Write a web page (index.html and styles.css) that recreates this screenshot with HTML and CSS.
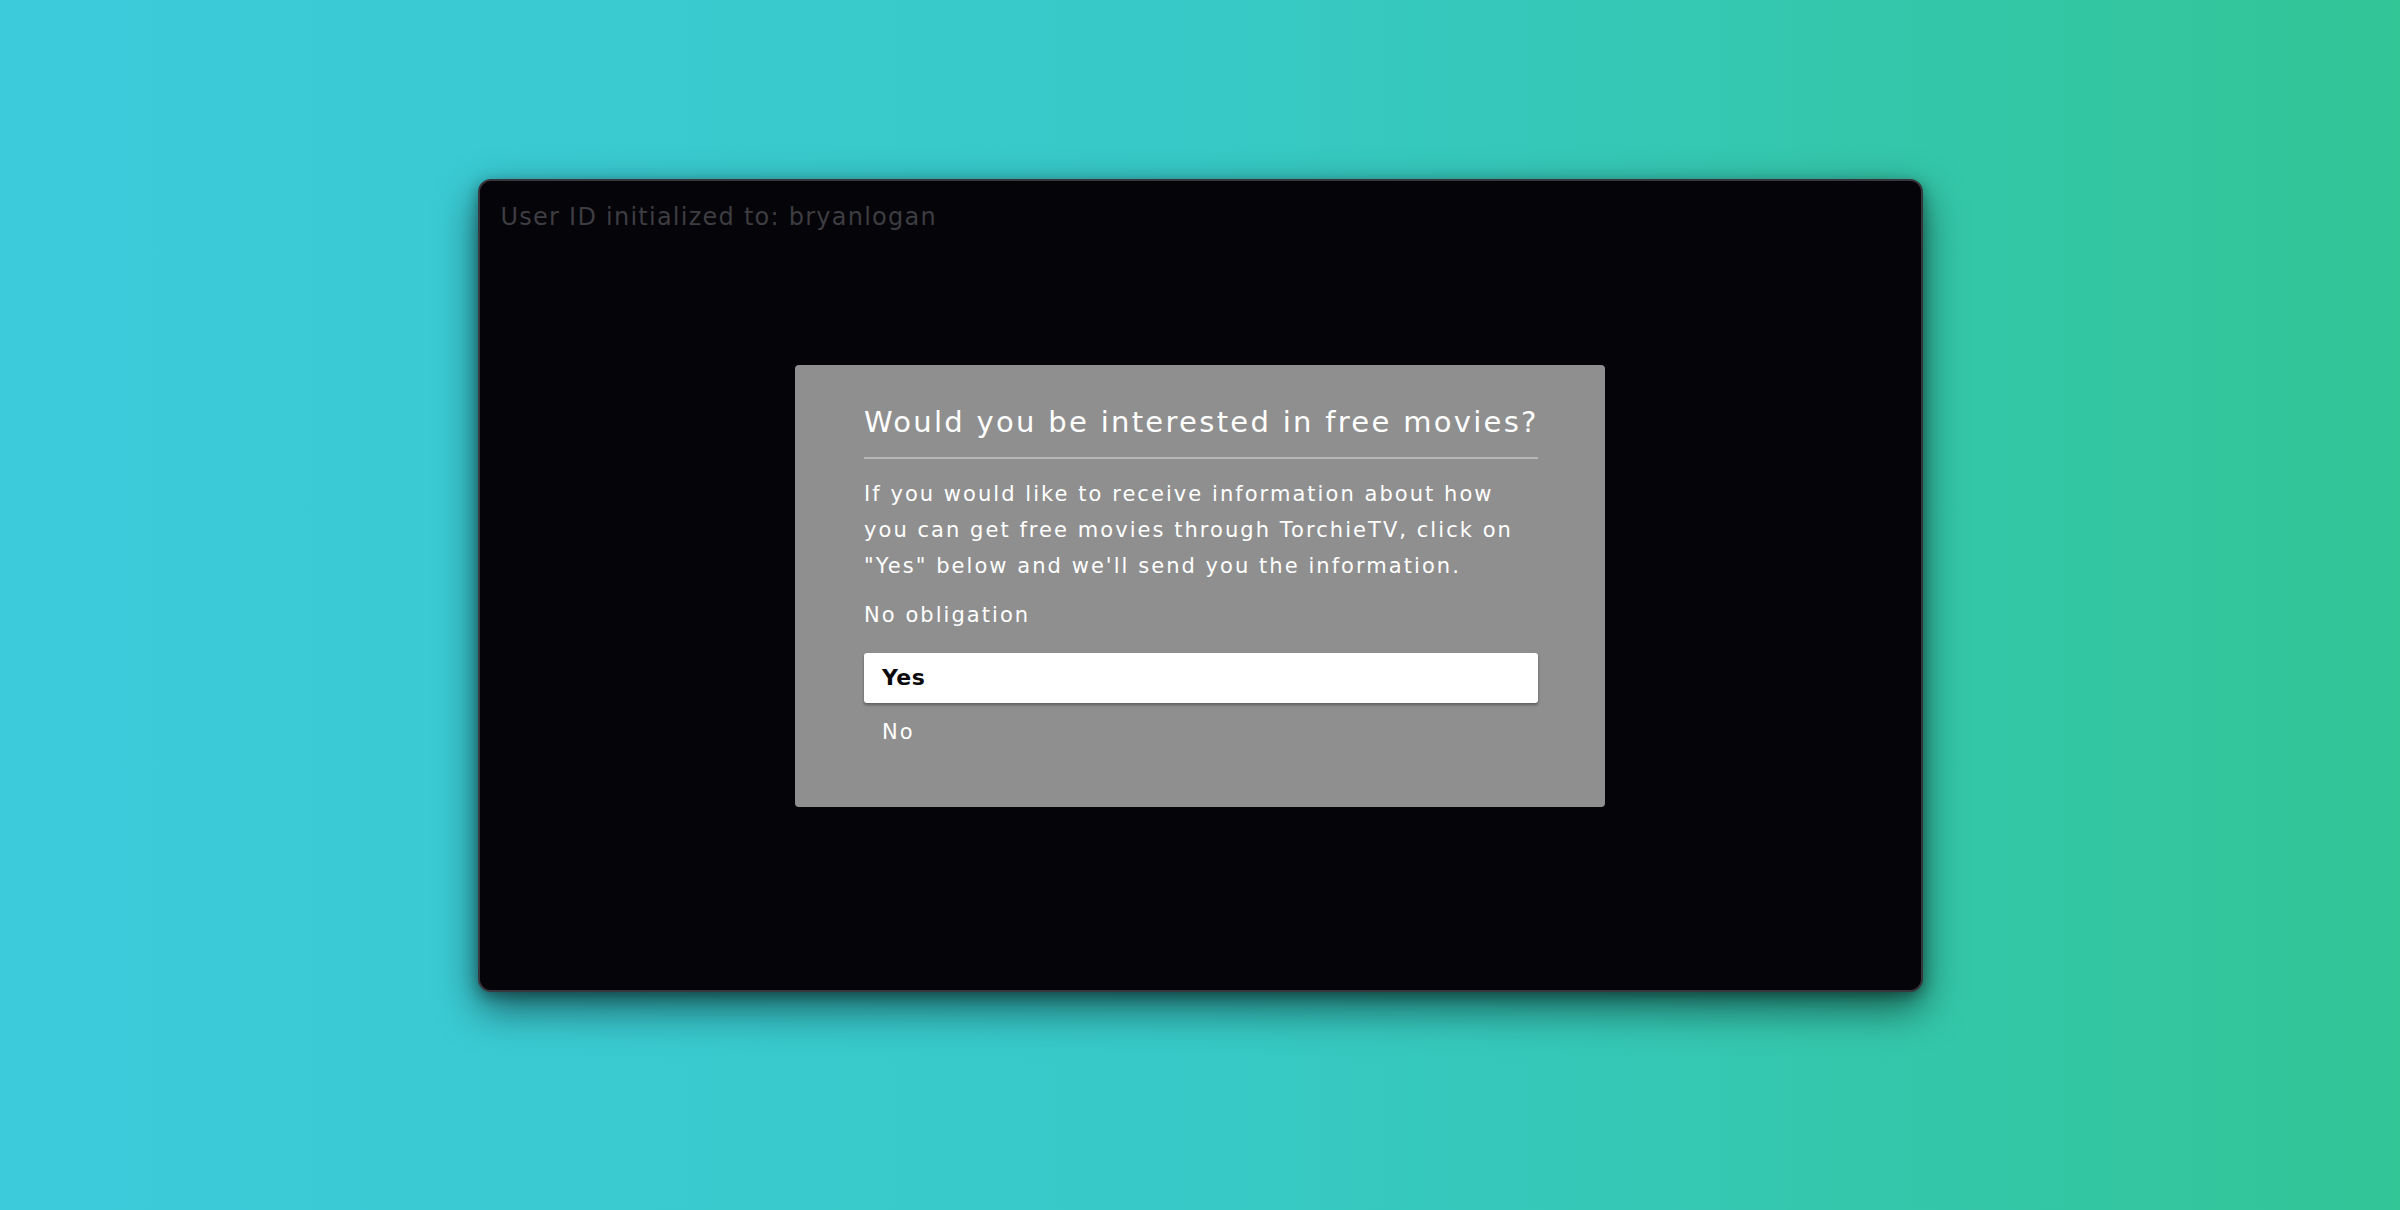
FILE: index.html
```html
<!DOCTYPE html>
<html lang="en">
<head>
<meta charset="utf-8">
<title>TorchieTV</title>
<link rel="stylesheet" href="styles.css">
</head>
<body>
<main class="stage">
  <section class="screen">
    <div class="status">User ID initialized to: bryanlogan</div>
    <div class="dialog" role="dialog" aria-labelledby="dlg-title">
      <h1 class="dialog-title" id="dlg-title">Would you be interested in free movies?</h1>
      <hr class="dialog-rule">
      <p class="dialog-text">If you would like to receive information about how you can get free movies through TorchieTV, click on "Yes" below and we'll send you the information.</p>
      <p class="dialog-note">No obligation</p>
      <ul class="options">
        <li class="option option-selected">Yes</li>
        <li class="option">No</li>
      </ul>
    </div>
  </section>
</main>
</body>
</html>
```
FILE: styles.css
```css
html, body {
  margin: 0;
  padding: 0;
}

body {
  width: 2400px;
  height: 1210px;
  overflow: hidden;
  background: linear-gradient(90deg, #3ccbdb 0%, #37c9c6 50%, #32c596 100%);
  font-family: "DejaVu Sans", "Open Sans", sans-serif;
}

.stage {
  display: flex;
  justify-content: center;
  padding-top: 179px;
}

.screen {
  position: relative;
  box-sizing: border-box;
  width: 1445px;
  height: 813px;
  background: #050409;
  border: 2px solid #38373d;
  border-radius: 13px;
  box-shadow: 0 16px 40px rgba(0, 0, 0, 0.55), 0 4px 14px rgba(0, 0, 0, 0.35);
}

.status {
  padding: 21px 0 0 21px;
  font-size: 24px;
  line-height: 30px;
  letter-spacing: 1.25px;
  color: #3d3d42;
}

.dialog {
  position: absolute;
  left: 50%;
  top: 50%;
  transform: translate(-50%, -50%);
  box-sizing: border-box;
  width: 810px;
  padding: 39px 67px 57px 69px;
  background: #8f8f8f;
  border-radius: 4px;
  color: #ffffff;
}

.dialog-title {
  margin: 0;
  font-size: 29px;
  font-weight: 400;
  line-height: 36px;
  letter-spacing: 2.3px;
  white-space: nowrap;
}

.dialog-rule {
  margin: 17px 0 0;
  height: 2px;
  border: 0;
  background: #b7b7b7;
}

.dialog-text,
.dialog-note,
.option {
  font-size: 21px;
  line-height: 36px;
  letter-spacing: 2.05px;
}

.dialog-text {
  margin: 17px 0 0;
}

.dialog-note {
  margin: 13px 0 0;
}

.options {
  list-style: none;
  margin: 20px 0 0;
  padding: 0;
}

.option {
  display: flex;
  align-items: center;
  padding-left: 18px;
}

.option-selected {
  height: 50px;
  margin-bottom: 11px;
  background: #ffffff;
  color: #0a0a0a;
  border-radius: 3px;
  font-size: 22px;
  font-weight: 600;
  letter-spacing: 0.4px;
  box-shadow: 0 2px 3px rgba(0, 0, 0, 0.35);
}
```
